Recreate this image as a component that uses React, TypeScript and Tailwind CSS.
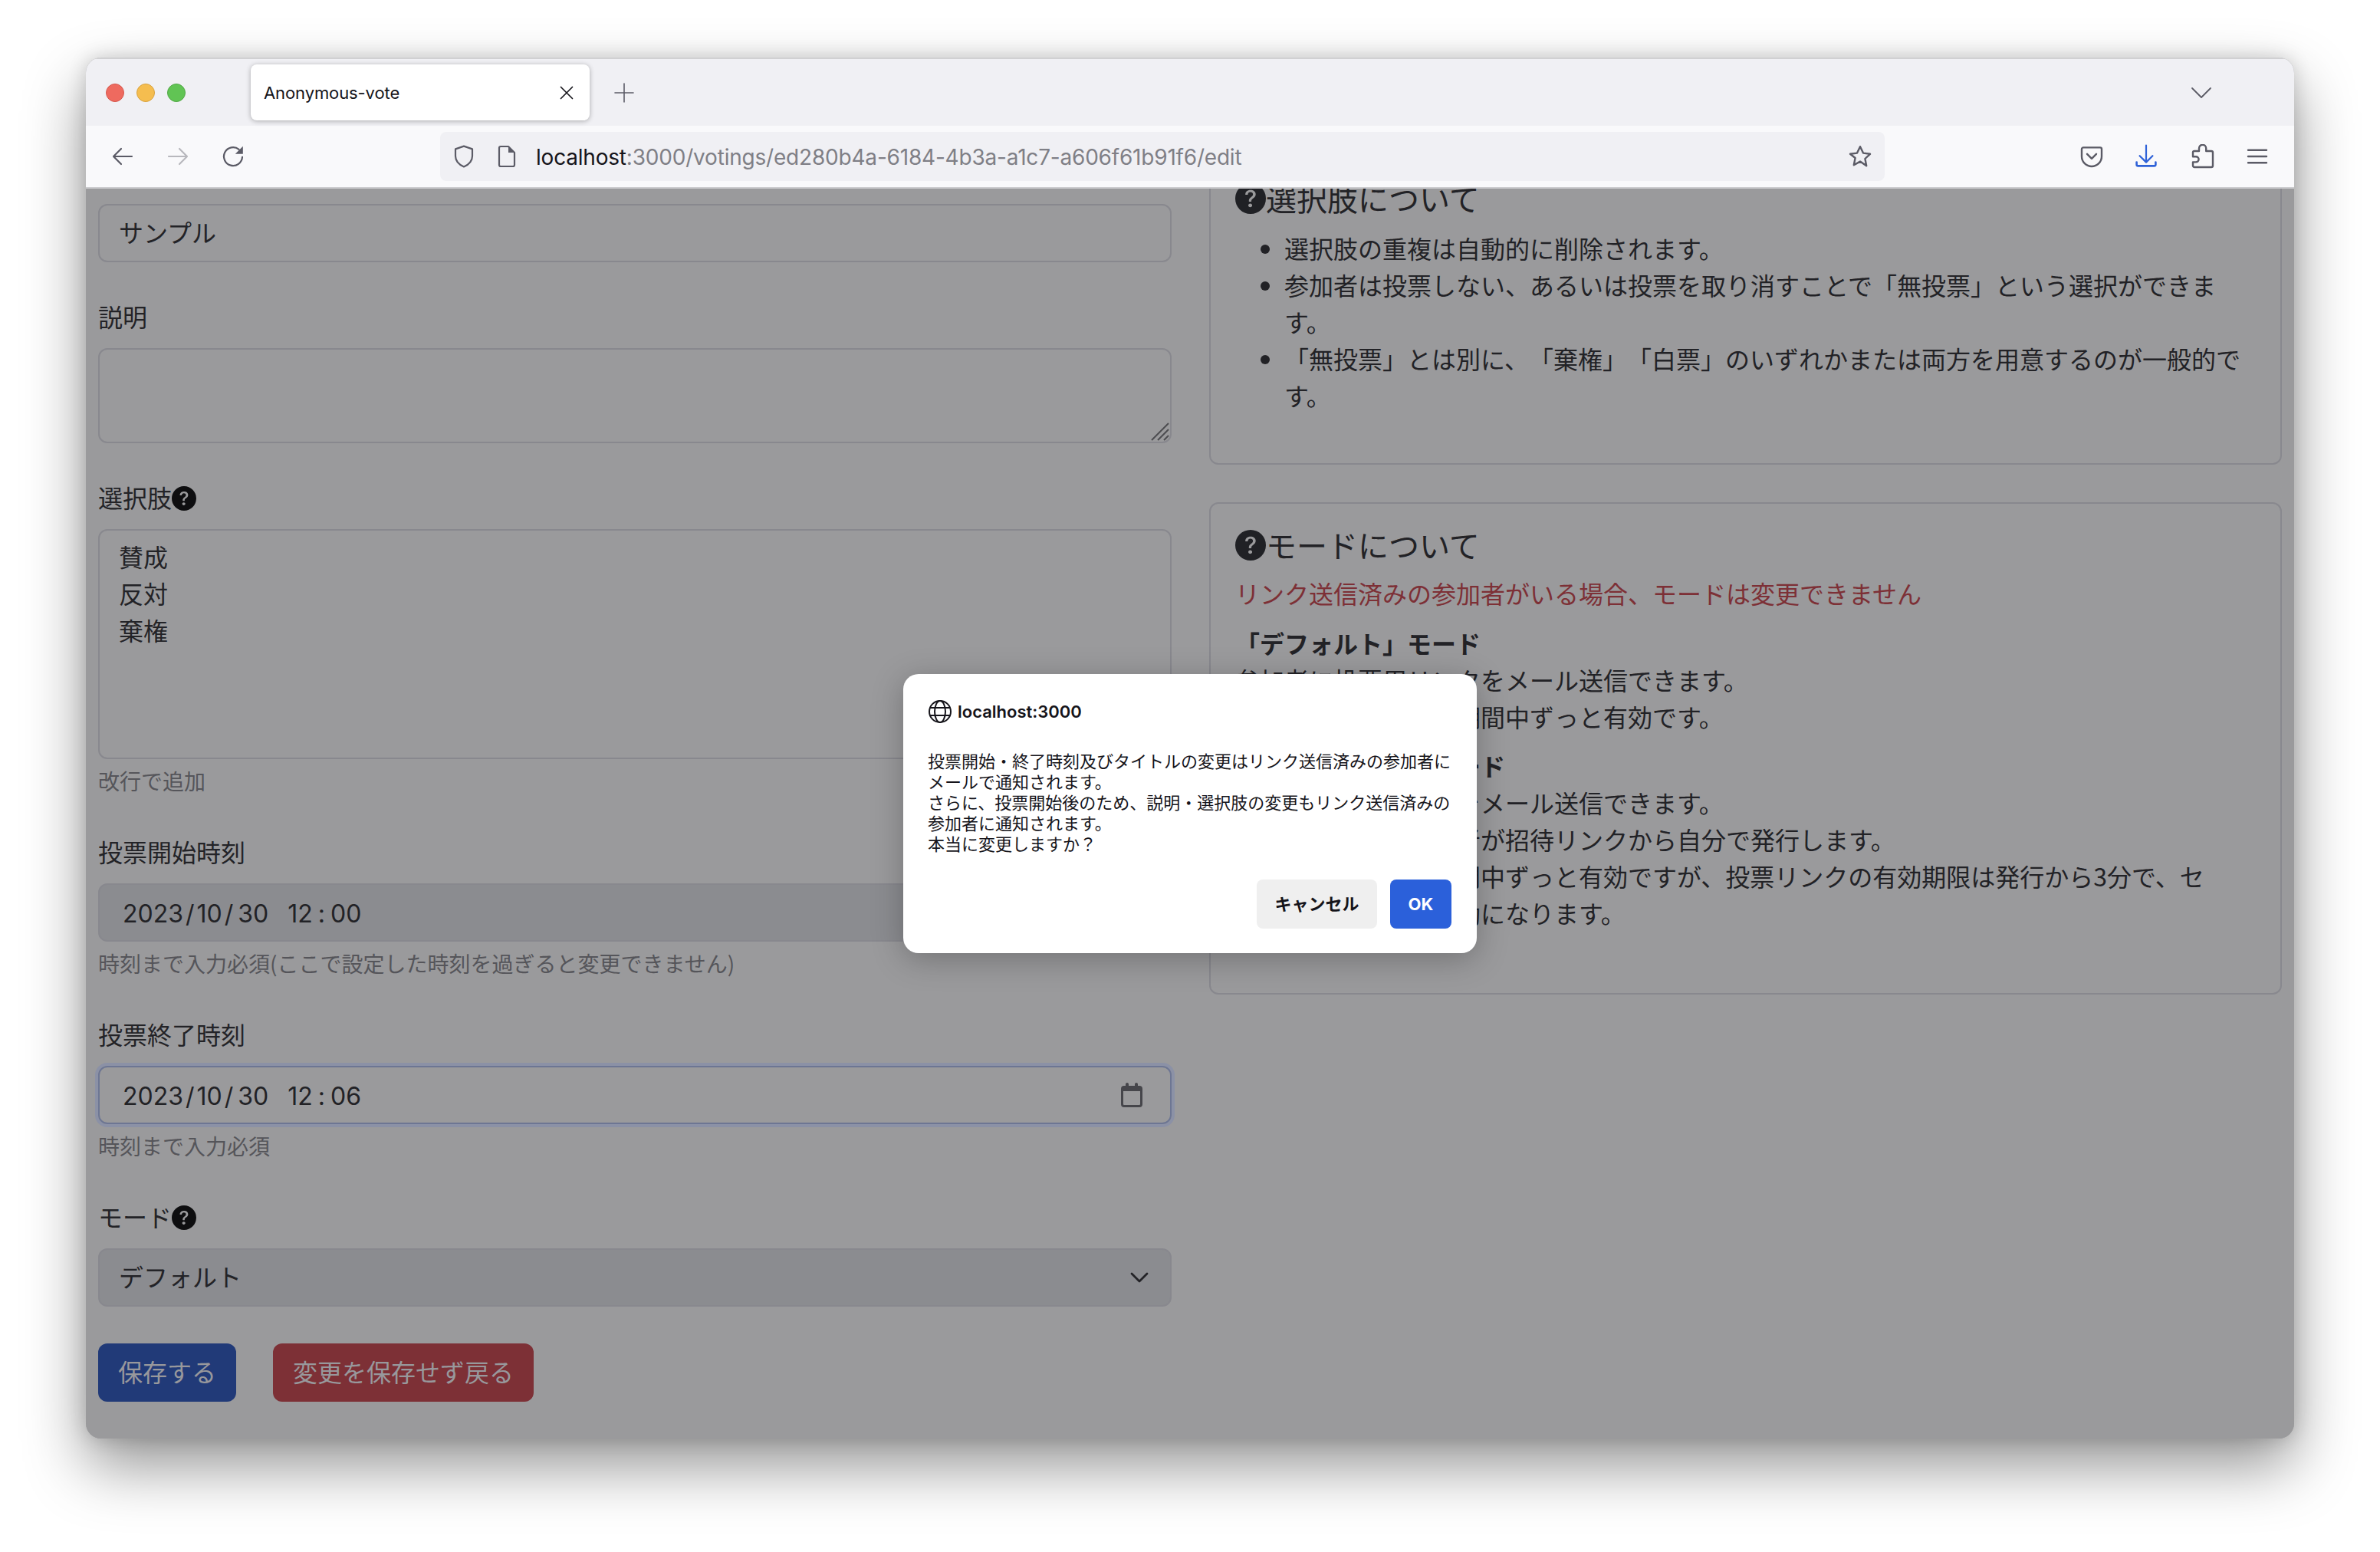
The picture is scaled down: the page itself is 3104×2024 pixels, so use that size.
import React from "react";
import { BsQuestionCircleFill } from "react-icons/bs";

const Ic = ({ size = 32, children, className = "" }: { size?: number; children: React.ReactNode; className?: string }) => (
  <svg width={size} height={size} viewBox="0 0 16 16" fill="none" stroke="currentColor" strokeWidth={1.1} strokeLinecap="round" strokeLinejoin="round" className={"shrink-0 " + className}>
    {children}
  </svg>
);

const Label = ({ text, help }: { text: string; help?: boolean }) => (
  <div className="h-[48px] mb-4 flex items-center text-[32px] leading-[48px] text-[#232327]">
    <span className="pb-[5px]">{text}</span>
    {help && <BsQuestionCircleFill className="w-[32px] h-[32px] text-[#0e0e10]" />}
  </div>
);

const Help = ({ text }: { text: string }) => (
  <div className="mt-2 h-[42px] text-[28px] leading-[40px] text-[#55555a]">{text}</div>
);

const DateText = ({ v }: { v: [string, string, string, string, string] }) => (
  <div className="pt-[3px] flex items-center font-['Inter','Noto_Sans_CJK_JP',sans-serif] text-[32px] text-[#222226] whitespace-pre">
    <span>{v[0]}</span>
    <span className="mx-[3px]">/</span>
    <span>{v[1]}</span>
    <span className="ml-[3px] mr-[6px]">/</span>
    <span>{v[2]}</span>
    <span className="ml-[25px]">{v[3]}</span>
    <span className="mx-[7px]">:</span>
    <span>{v[4]}</span>
  </div>
);

const CardTitle = ({ text }: { text: string }) => (
  <div className="h-[48px] flex items-center text-[40px] leading-[48px] text-[#222226]">
    <BsQuestionCircleFill className="w-[40px] h-[40px] text-[#202125] shrink-0" />
    <span className="pb-[3px]">{text}</span>
  </div>
);

export default function App() {
  return (
    <div className="w-[3104px] h-[2024px] bg-white overflow-hidden pl-[112px] pt-[75px] font-['Noto_Sans_CJK_JP',sans-serif] [text-spacing-trim:space-all]">
      <div className="relative w-[2880px] h-[1801px] rounded-[20px] overflow-hidden shadow-[0_36px_80px_rgba(0,0,0,0.42),0_0_24px_rgba(0,0,0,0.16)] bg-[#9a9a9c]">
        {/* tab strip */}
        <div className="h-[89px] bg-[#f0f0f4] flex items-center border-t-2 border-[#d0d0d2] font-['Inter','Noto_Sans_CJK_JP',sans-serif]">
          <div className="flex items-center gap-4 pl-[26px]">
            <div className="w-[24px] h-[24px] rounded-full bg-[#ee6a5f] border border-[#d5584e]" />
            <div className="w-[24px] h-[24px] rounded-full bg-[#f5bd4f] border border-[#d8a23f]" />
            <div className="w-[24px] h-[24px] rounded-full bg-[#61c454] border border-[#52a846]" />
          </div>
          <div className="ml-[85px] w-[442px] h-[73px] bg-white rounded-[8px] shadow-[0_1px_6px_rgba(0,0,0,0.3)] flex items-center pl-[17px] pr-[18px]">
            <span className="pt-[2px] text-[22px] text-[#15141a] flex-1 tracking-[-0.1px]">Anonymous-vote</span>
            <Ic size={24} className="text-[#15141a]"><path d="M3 3l10 10M13 3L3 13" /></Ic>
          </div>
          <Ic size={32} className="ml-[29px] text-[#5b5b66]"><path d="M8 2v12M2 8h12" strokeWidth={0.8} /></Ic>
          <Ic size={32} className="ml-[2025px] text-[#5b5b66]"><path d="M2 5l6 6 6-6" strokeWidth={0.9} /></Ic>
        </div>
        {/* toolbar */}
        <div className="h-[82px] bg-[#f9f9fb] border-b-2 border-[#cccccf] flex items-center pl-[32px] font-['Inter','Noto_Sans_CJK_JP',sans-serif]">
          <Ic className="text-[#5b5b66]"><path d="M14 8H2M7 3L2 8l5 5" /></Ic>
          <Ic className="ml-[40px] text-[#b8b8bd]"><path d="M2 8h12M9 3l5 5-5 5" /></Ic>
          <Ic className="ml-[40px] text-[#5b5b66]">
            <path d="M14 8.400a6 6 0 1 1-2.200-5" />
            <path d="M14.400 1.400v5H9.400z" fill="currentColor" stroke="none" />
          </Ic>
          <div className="ml-[254px] w-[1884px] h-[64px] bg-[#f0f0f4] rounded-[8px] flex items-center pl-[15px] pr-[16px]">
            <Ic className="text-[#5b5b66]"><path d="M8 1.300l5.500 1.900v4.500c0 3.400-2.600 5.700-5.500 7-2.900-1.300-5.500-3.600-5.500-7V3.200z" /></Ic>
            <Ic className="ml-[24px] text-[#5b5b66]">
              <path d="M4 1.500h5l4 4v8a1 1 0 0 1-1 1H4a1 1 0 0 1-1-1v-11a1 1 0 0 1 1-1z" />
              <path d="M9 1.500v4h4z" fill="currentColor" stroke="none" />
            </Ic>
            <div className="ml-[22px] pt-[2px] flex-1 text-[28px] whitespace-nowrap text-[#7f7f86] tracking-[-0.2px]">
              <span className="text-[#15141a]">localhost</span>:3000/votings/ed280b4a-6184-4b3a-a1c7-a606f61b91f6/edit
            </div>
            <Ic className="text-[#5b5b66]"><path d="M8 1.600l2 4.200 4.500.6-3.300 3.100.9 4.600L8 11.300l-4.100 2.300.9-4.600L1.500 6.400l4.500-.6z" strokeWidth={1.2} /></Ic>
          </div>
          <Ic className="ml-[254px] text-[#5b5b66]">
            <path d="M2.500 2.200h11a1 1 0 0 1 1 1v4.800a6.500 6.500 0 0 1-13 0V3.200a1 1 0 0 1 1-1z" strokeWidth={1.2} />
            <path d="M5 6.400l3 3 3-3" strokeWidth={1.2} />
          </Ic>
          <Ic className="ml-[39px] text-[#2f62d8]">
            <path d="M8 .8v11M3.800 7.600L8 11.800l4.200-4.200" />
            <path d="M1.800 11.800v1.400a1 1 0 0 0 1 1h10.400a1 1 0 0 0 1-1v-1.400" strokeWidth={1.3} />
          </Ic>
          <Ic className="ml-[42px] text-[#5b5b66]">
            <path d="M2.300 4.500H5.500V2.700a2.300 2.300 0 0 1 4.600 0V4.500H13.500a1 1 0 0 1 1 1V14a1 1 0 0 1-1 1H2.500a1 1 0 0 1-1-1V11.700H3.500a1.800 1.800 0 0 0 0-3.600H1.500V5.300a.8.800 0 0 1 .8-.8z" strokeWidth={1.2} />
          </Ic>
          <Ic className="ml-[39px] text-[#5b5b66]"><path d="M2 3.900h12M2 8h12M2 12.100h12" strokeWidth={1.2} /></Ic>
        </div>
        {/* content */}
        <div className="h-[1630px] flex overflow-hidden pl-[16px] gap-[49px] bg-[#9a9a9c]">
          <div className="w-[1400px] pt-[20px] shrink-0">
            <div className="h-[76px] border-2 border-[#88888e] rounded-[12px] flex items-center pl-[25px] pb-[5px] text-[32px] text-[#232327]">サンプル</div>
            <div className="mt-[48px]"><Label text="説明" /></div>
            <div className="relative h-[124px] border-2 border-[#88888e] rounded-[12px]">
              <svg width="26" height="26" viewBox="0 0 26 26" className="absolute right-[1px] bottom-[1px] text-[#4c4c50]" stroke="currentColor" strokeWidth="2">
                <path d="M25 3L3 25M25 11L11 25M25 19L19 25" />
              </svg>
            </div>
            <div className="mt-[48px]"><Label text="選択肢" help /></div>
            <div className="h-[300px] border-2 border-[#88888e] rounded-[12px] pl-[25px] pt-[9px] text-[32px] leading-[48px] text-[#232327]">
              <div>賛成</div><div>反対</div><div>棄権</div>
            </div>
            <Help text="改行で追加" />
            <div className="mt-[48px]"><Label text="投票開始時刻" /></div>
            <div className="h-[76px] bg-[#8b8c90] border-2 border-[#88888e] rounded-[12px] flex items-center pl-[30px]"><DateText v={["2023", "10", "30", "12", "00"]} /></div>
            <Help text="時刻まで入力必須(ここで設定した時刻を過ぎると変更できません)" />
            <div className="mt-[48px]"><Label text="投票終了時刻" /></div>
            <div className="h-[76px] border-2 border-[#6d7693] rounded-[12px] shadow-[0_0_0_4px_#8b91a6] flex items-center pl-[30px] pr-[34px] justify-between">
              <DateText v={["2023", "10", "30", "12", "06"]} />
              <svg width="32" height="32" viewBox="0 0 32 32" className="text-[#46464b]" fill="currentColor">
                <path d="M8 2a2 2 0 0 1 4 0v2h8V2a2 2 0 0 1 4 0v2h2a4 4 0 0 1 4 4v20a4 4 0 0 1-4 4H6a4 4 0 0 1-4-4V8a4 4 0 0 1 4-4h2zM5 11v17a1 1 0 0 0 1 1h20a1 1 0 0 0 1-1V11z" fillRule="evenodd" />
              </svg>
            </div>
            <Help text="時刻まで入力必須" />
            <div className="mt-[48px]"><Label text="モード" help /></div>
            <div className="h-[76px] bg-[#8b8c90] border-2 border-[#88888e] rounded-[12px] flex items-center pl-[25px] pr-[24px] justify-between text-[32px] text-[#232327]">
              <span className="pb-[5px]">デフォルト</span>
              <svg width="32" height="32" viewBox="0 0 16 16" fill="none" stroke="#232327" strokeWidth="1.400" strokeLinecap="round" strokeLinejoin="round"><path d="M3 5.500l5 5 5-5" /></svg>
            </div>
            <div className="mt-[48px] flex gap-[48px]">
              <div className="h-[76px] w-[180px] rounded-[12px] bg-[#213a78] flex items-center justify-center pb-[5px] text-[32px] text-[#98989c]">保存する</div>
              <div className="h-[76px] w-[340px] rounded-[12px] bg-[#7d3036] flex items-center justify-center pb-[5px] text-[32px] text-[#98989c]">変更を保存せず戻る</div>
            </div>
          </div>
          <div className="flex-1 pr-[16px] text-[#222226]">
            <div className="-mt-[45px] border-2 border-[#88888e] rounded-[12px] px-[32px] pt-[32px] pb-[65px]">
              <CardTitle text="選択肢について" />
              <ul className="mt-[16px] pl-[64px] list-disc text-[32px] leading-[48px]">
                <li>選択肢の重複は自動的に削除されます。</li>
                <li>参加者は投票しない、あるいは投票を取り消すことで「無投票」という選択ができます。</li>
                <li>「無投票」とは別に、「棄権」「白票」のいずれかまたは両方を用意するのが一般的です。</li>
              </ul>
            </div>
            <div className="mt-[49px] h-[642px] border-2 border-[#88888e] rounded-[12px] px-[32px] pt-[30px]">
              <CardTitle text="モードについて" />
              <div className="mt-[14px] text-[32px] leading-[48px] text-[#7d3036]">リンク送信済みの参加者がいる場合、モードは変更できません</div>
              <div className="mt-[17px] text-[32px] leading-[48px]">
                <div className="font-bold">「デフォルト」モード</div>
                <div>参加者に投票用リンクをメール送信できます。</div>
                <div>投票用リンクは投票期間中ずっと有効です。</div>
                <div className="mt-[16px] font-bold">「招待リンク式」モード</div>
                <div>参加者に招待リンクをメール送信できます。</div>
                <div>投票用リンクは参加者が招待リンクから自分で発行します。</div>
                <div>招待リンクは投票期間中ずっと有効ですが、投票リンクの有効期限は発行から3分で、セ</div>
                <div>ッション切れると無効になります。</div>
              </div>
            </div>
          </div>
        </div>
        {/* dialog */}
        <div className="absolute left-[1066px] top-[804px] w-[748px] h-[364px] bg-white rounded-[20px] shadow-[0_8px_40px_rgba(0,0,0,0.25)] pl-[32px] pr-[33px] pt-[33px] font-['Inter','Noto_Sans_CJK_JP',sans-serif]">
          <div className="flex items-center h-[32px] gap-[7px]">
            <svg width="32" height="32" viewBox="0 0 16 16" fill="none" stroke="#15141a" strokeWidth="1">
              <circle cx="8" cy="8" r="7" />
              <ellipse cx="8" cy="8" rx="3.500" ry="7" />
              <path d="M1.500 5.500h13M1.500 10.500h13" />
            </svg>
            <span className="text-[22px] font-semibold text-[#15141a]">localhost:3000</span>
          </div>
          <div className="mt-[34px] text-[22px] leading-[27px] text-[#15141a] font-['Noto_Sans_CJK_JP',sans-serif] whitespace-nowrap">
            <div>投票開始・終了時刻及びタイトルの変更はリンク送信済みの参加者に</div>
            <div>メールで通知されます。</div>
            <div>さらに、投票開始後のため、説明・選択肢の変更もリンク送信済みの</div>
            <div>参加者に通知されます。</div>
            <div>本当に変更しますか？</div>
          </div>
          <div className="mt-[34px] flex justify-end gap-[17px]">
            <div className="w-[157px] h-[64px] rounded-[8px] bg-[#efefef] flex items-center justify-center text-[22px] font-bold text-[#15141a]">キャンセル</div>
            <div className="w-[80px] h-[64px] rounded-[8px] bg-[#2b60da] flex items-center justify-center text-[22px] font-bold text-white">OK</div>
          </div>
        </div>
      </div>
    </div>
  );
}
